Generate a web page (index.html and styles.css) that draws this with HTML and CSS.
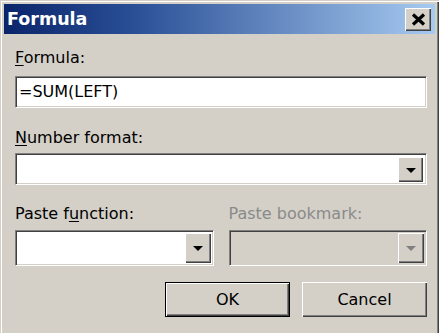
FILE: index.html
```html
<!DOCTYPE html>
<html>
<head>
    <title>Formula</title>
    <link rel="stylesheet" href="styles.css">
</head>
<body>
    <div class="window">
        <div class="titlebar">
            <span class="title">Formula</span>
            <div class="close">
                <svg width="15" height="13" viewBox="0 0 15 13">
                    <path d="M2 1.5 L13 11.5 M13 1.5 L2 11.5" stroke="#000" stroke-width="3.2" fill="none"/>
                </svg>
            </div>
        </div>
        <div class="content">
            <div class="label label-formula"><u>F</u>ormula:</div>
            <div class="field field-formula">=SUM(LEFT)</div>

            <div class="label label-number"><u>N</u>umber format:</div>
            <div class="field combo combo-number">
                <div class="drop"><span class="arrow"></span></div>
            </div>

            <div class="pair">
                <div>
                    <div class="label label-paste">Paste f<u>u</u>nction:</div>
                    <div class="field combo combo-tall">
                        <div class="drop"><span class="arrow"></span></div>
                    </div>
                </div>
                <div>
                    <div class="label label-paste disabled">Paste bookmark:</div>
                    <div class="field combo combo-tall off">
                        <div class="drop"><span class="arrow"></span></div>
                    </div>
                </div>
            </div>

            <div class="buttons">
                <div class="btn default">OK</div>
                <div class="btn">Cancel</div>
            </div>
        </div>
    </div>
</body>
</html>
```

FILE: styles.css
```css
body {
    margin: 0;
    background: #d4d0c8;
    font-family: "DejaVu Sans", Verdana, sans-serif;
    overflow: hidden;
}
/* the dialog runs off the bottom of the shot, so no bottom edge */
.window {
    width: 439px;
    height: 333px;
    box-sizing: border-box;
    padding: 4px;
    background: #d4d0c8;
    box-shadow: inset 1px 1px #d4d0c8, inset 2px 2px #fff,
                inset -1px 0 #404040, inset -2px 0 #808080;
}
.titlebar {
    height: 30px;
    display: flex;
    align-items: center;
    justify-content: space-between;
    padding: 0 4px 0 3px;
    background: linear-gradient(to right, #0a246a, #2a4f96 30%, #a6caf0);
}
.title {
    color: #fff;
    font-weight: bold;
    font-size: 17.5px;
}
.close {
    width: 26px;
    height: 23px;
    display: flex;
    align-items: center;
    justify-content: center;
    background: #d4d0c8;
    box-shadow: inset 1px 1px #fff, inset -1px -1px #404040, inset -2px -2px #808080;
}
.content {
    padding: 15px 8px 0 11px;
}
.label {
    font-size: 16px;
    line-height: 18px;
    color: #000;
}
.label u {
    text-decoration-thickness: 1px;
    text-underline-offset: 2px;
}
.disabled {
    color: #8a8a8a;
}
.label-formula {
    margin-bottom: 9px;
}
.label-number {
    margin-top: 21px;
    margin-bottom: 6px;
}
.label-paste {
    margin-top: 20px;
    margin-bottom: 7px;
}
.field {
    box-sizing: border-box;
    height: 32px;
    background: #fff;
    border: 1px solid;
    border-color: #808080 #fff #fff #808080;
    box-shadow: inset 1px 1px #404040, inset -1px -1px #d4d0c8;
    font-size: 16px;
    line-height: 30px;
    padding-left: 3px;
}
.combo {
    display: flex;
    justify-content: flex-end;
    padding: 2px;
}
.combo-number .drop {
    width: 25px;
    height: 25px;
    margin-top: 1px;
    margin-right: 1px;
}
.combo-tall {
    height: 36px;
}
.off {
    background: #d4d0c8;
}
.drop {
    box-sizing: border-box;
    width: 26px;
    height: 100%;
    display: flex;
    align-items: center;
    justify-content: center;
    background: #d4d0c8;
    box-shadow: inset 1px 1px #fff, inset -1px -1px #404040, inset -2px -2px #808080;
}
.arrow {
    width: 0;
    height: 0;
    border-left: 5px solid transparent;
    border-right: 5px solid transparent;
    border-top: 5px solid #000;
    margin-top: 1px;
}
.off .arrow {
    border-top-color: #808080;
}
.pair {
    display: grid;
    grid-template-columns: 1fr 1fr;
    column-gap: 15px;
}
.buttons {
    display: flex;
    justify-content: flex-end;
    gap: 12px;
    margin-top: 16px;
}
.btn {
    box-sizing: border-box;
    width: 125px;
    height: 35px;
    display: flex;
    align-items: center;
    justify-content: center;
    font-size: 16px;
    background: #d4d0c8;
    box-shadow: inset 1px 1px #fff, inset -1px -1px #404040, inset -2px -2px #808080;
}
.default {
    border: 1px solid #000;
}
```
